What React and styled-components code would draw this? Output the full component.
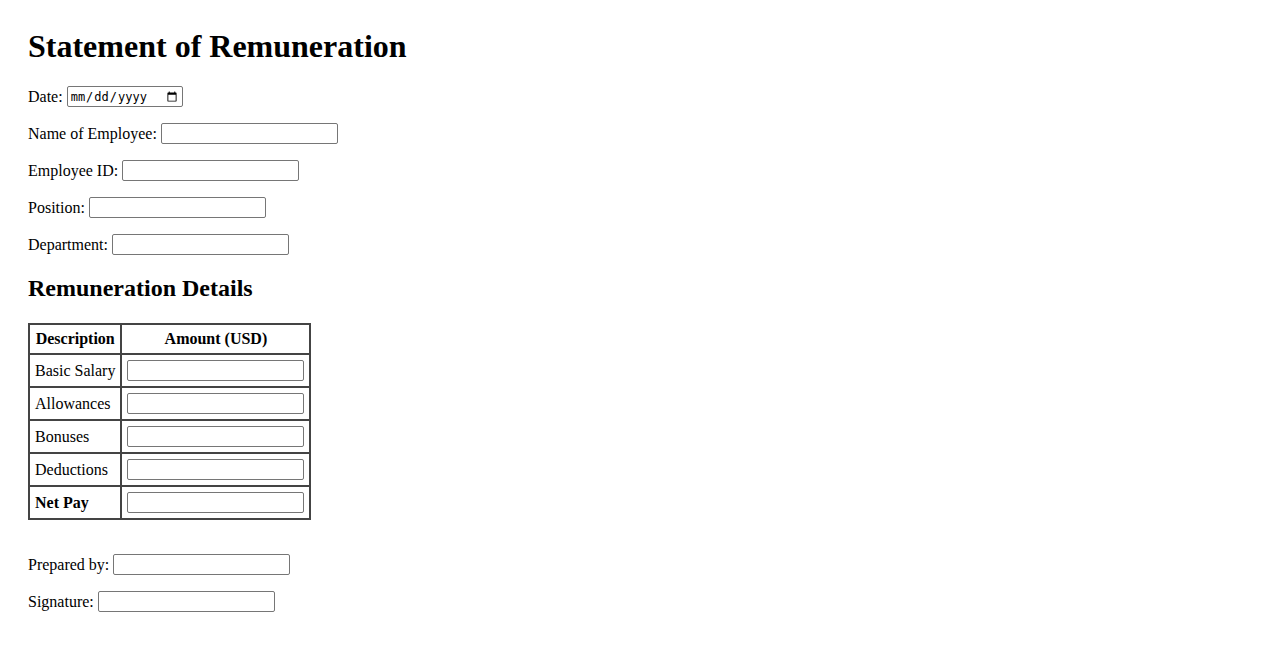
import React from "react";
import styled, { createGlobalStyle } from "styled-components";

const GlobalStyle = createGlobalStyle`
  body {
    margin: 0;
    background: #ffffff;
    color: #000000;
    font-family: "Liberation Serif", "Times New Roman", serif;
    font-size: 16px;
  }
`;

const Page = styled.div`
  padding: 28px;
`;

const Title = styled.h1`
  font-size: 32px;
  font-weight: bold;
  margin: 0 0 21px;
`;

const SubTitle = styled.h2`
  font-size: 24px;
  font-weight: bold;
  margin: 20px 0 21px;
`;

const FieldRow = styled.div`
  display: flex;
  align-items: center;
  gap: 4px;
  margin: ${(props) => (props.spaced ? "34px 0 16px" : "0 0 16px")};
`;

const Label = styled.label`
  line-height: 18px;
`;

const TextInput = styled.input`
  box-sizing: border-box;
  width: ${(props) => (props.type === "date" ? "116px" : "177px")};
  height: 21px;
  padding: 1px 2px;
  border: 1px solid #767676;
  border-radius: 2px;
  background: #ffffff;
  font-family: ${(props) =>
    props.type === "date"
      ? '"DejaVu Sans Mono", "Liberation Mono", monospace'
      : '"Liberation Sans", Arial, sans-serif'};
  font-size: 12px;
  display: block;
`;

const Table = styled.table`
  border-collapse: collapse;
  border: 2px solid #444;
`;

const HeadCell = styled.th`
  border: 2px solid #444;
  padding: 5px;
  font-weight: bold;
  text-align: center;
  line-height: 18px;
`;

const Cell = styled.td`
  border: 2px solid #444;
  padding: 5px;
  text-align: left;
  line-height: 18px;
  font-weight: ${(props) => (props.strong ? "bold" : "normal")};
`;

const rows = ["Basic Salary", "Allowances", "Bonuses", "Deductions", "Net Pay"];

function Field({ label, type = "text", spaced }) {
  return (
    <FieldRow spaced={spaced}>
      <Label>{label}</Label>
      <TextInput type={type} />
    </FieldRow>
  );
}

export default function App() {
  return (
    <>
      <GlobalStyle />
      <Page>
        <Title>Statement of Remuneration</Title>
        <Field label="Date:" type="date" />
        <Field label="Name of Employee:" />
        <Field label="Employee ID:" />
        <Field label="Position:" />
        <Field label="Department:" />

        <SubTitle>Remuneration Details</SubTitle>
        <Table>
          <thead>
            <tr>
              <HeadCell>Description</HeadCell>
              <HeadCell>Amount (USD)</HeadCell>
            </tr>
          </thead>
          <tbody>
            {rows.map((row) => (
              <tr key={row}>
                <Cell strong={row === "Net Pay"}>{row}</Cell>
                <Cell>
                  <TextInput type="text" />
                </Cell>
              </tr>
            ))}
          </tbody>
        </Table>

        <Field label="Prepared by:" spaced />
        <Field label="Signature:" />
      </Page>
    </>
  );
}
